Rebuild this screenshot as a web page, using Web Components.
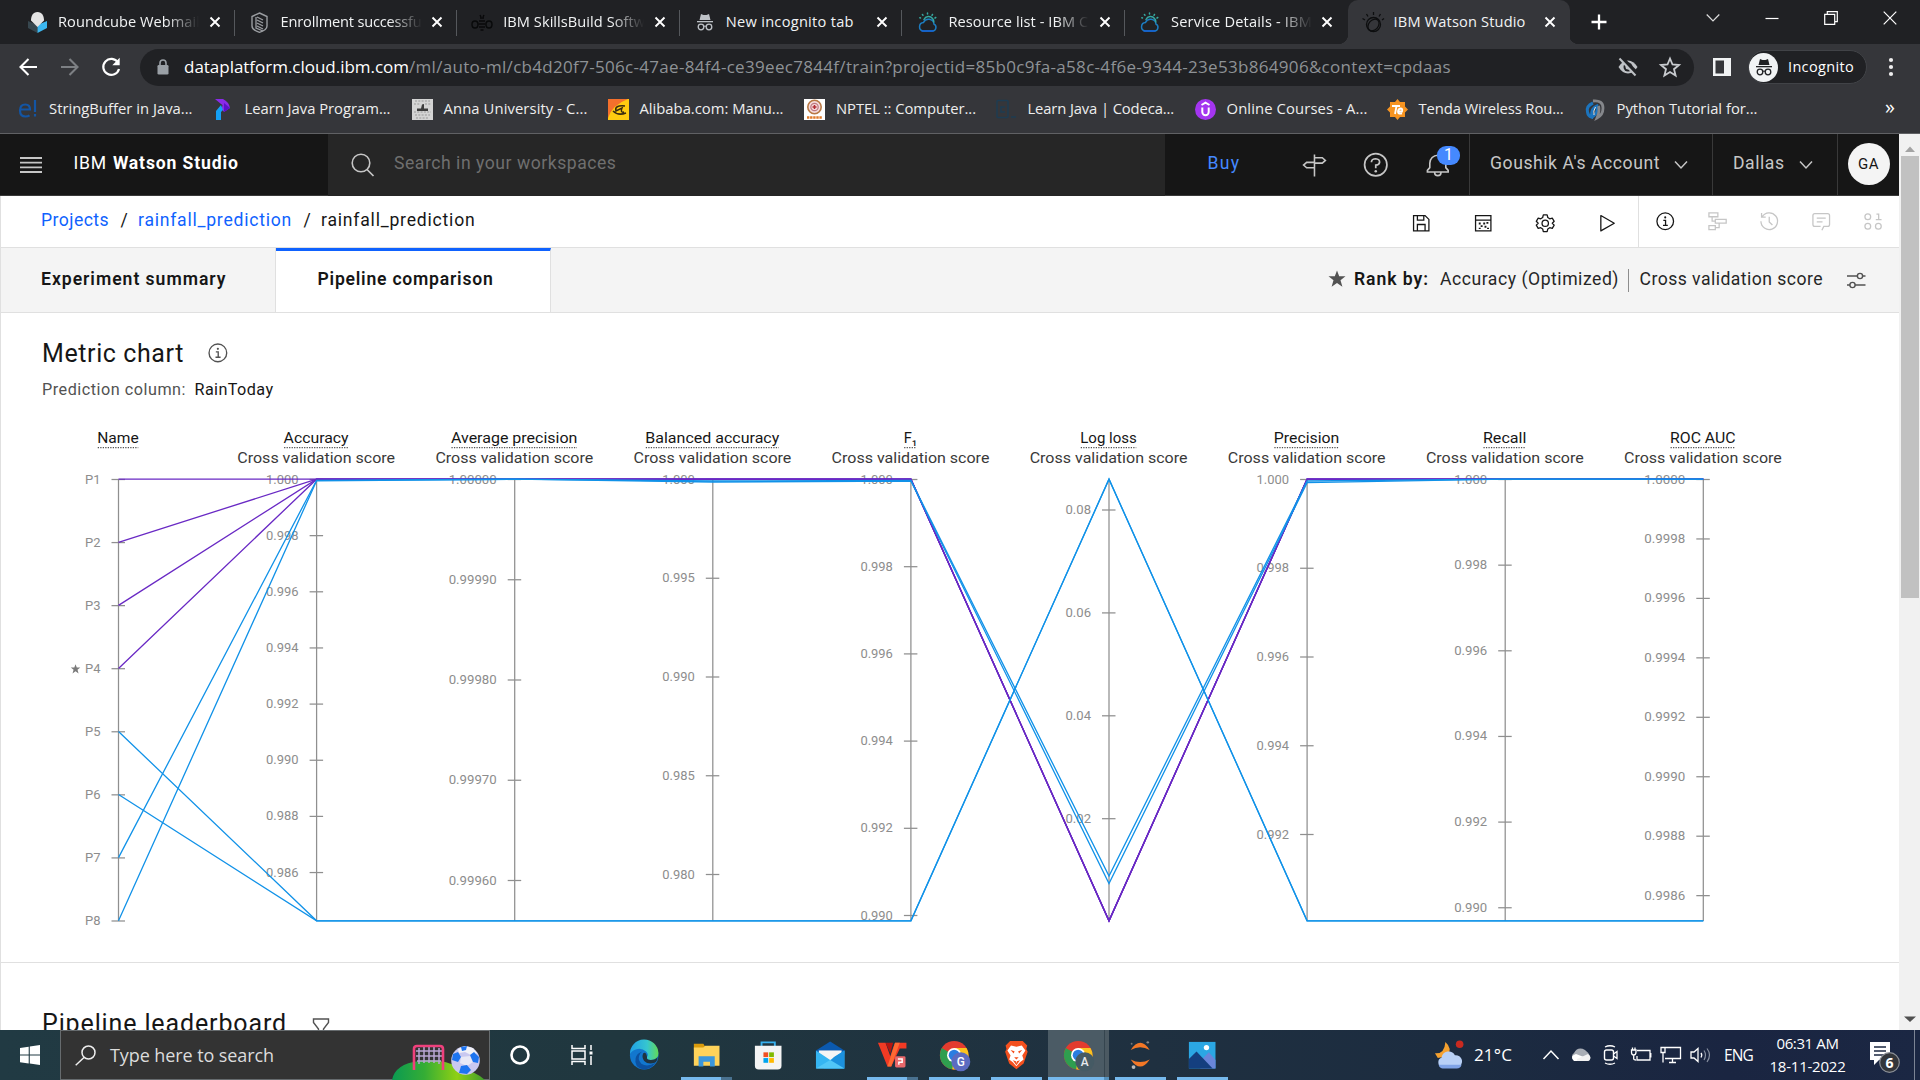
<!DOCTYPE html>
<html lang="en">
<head>
<meta charset="utf-8">
<title>IBM Watson Studio</title>
<style>
html,body{margin:0;padding:0;height:100%;overflow:hidden;background:#fff}
body{display:flex;flex-direction:column;width:1920px;height:1080px}
</style>
</head>
<body>
<browser-chrome></browser-chrome>
<page-view></page-view>
<task-bar></task-bar>
<script>
const SEG = '"Open Sans","Noto Sans",sans-serif';
const PLEX = 'Roboto,"Liberation Sans",sans-serif';

function define(name, markup, after) {
  customElements.define(name, class extends HTMLElement {
    constructor() { super(); this.attachShadow({mode: 'open'}); }
    connectedCallback() {
      this.shadowRoot.innerHTML = typeof markup === 'function' ? markup(this) : markup;
      if (after) after(this);
    }
  });
}

/* ---------- icons: [viewBox, content] ---------- */
const S = (c, w = 2) => `fill="none" stroke="${c}" stroke-width="${w}"`;
const C = 'currentColor';
const chromeLogo = (letter, bg, fg) => `
<circle cx="17" cy="17" r="15" fill="#e33b2e"/>
<path d="M17 17L4 9.500A15 15 0 0 0 15 31.900L23 20Z" fill="#2f9e4f"/>
<path d="M17 17L15 31.900A15 15 0 0 0 30 9.500H17Z" fill="#fcc31e"/>
<circle cx="17" cy="17" r="7.500" fill="#fff"/><circle cx="17" cy="17" r="5.700" fill="#2a7de1"/>
<circle cx="24" cy="24" r="10" fill="${bg}"/>
<text x="24" y="28.500" text-anchor="middle" font-family="Roboto,sans-serif" font-weight="500" font-size="12.500" fill="${fg}">${letter}</text>`;
const cloudSun = `<g fill="none" stroke-width="1.500" stroke-linecap="round"><path d="M6 19H15.500A3.600 3.600 0 0 0 17 12.200A5.500 5.500 0 0 0 6.500 10.500A4.300 4.300 0 0 0 6 19Z" stroke="#1c7cc0"/><path d="M5 19.100H16" stroke="#1562d6"/><path d="M7 7.500A5 5 0 0 1 15.500 6.500A5 5 0 0 1 16.800 10M3.500 6L2.800 5.700M6 3.300L5.400 2.600M10.500 2V1M15 3.300L15.500 2.500M18 6L18.800 5.500" stroke="#36a8a0"/></g>`;
const ICONS = {
 roundcube: ['0 0 21 21', '<path d="M1 9L10.500 13V21L1 16Z" fill="#37474f"/><path d="M20 9L10.500 13V21L20 16Z" fill="#3bb7f0"/><path d="M10.500 0C15 0 17 4 17 8.500L10.500 15L4 8.500C4 4 6 0 10.500 0Z" fill="#e4e4e4"/>'],
 shield: ['0 0 21 21', `<path d="M10.500 1L18 4.500V14Q18 18 10.500 20.300Q3 18 3 14V4.500Z" ${S('#9a9da1',1.4)}/><path d="M7 5V16L14 19M8 5L14 8M8 8L14 11M8 11L14 14M8 14L14 17" ${S('#9a9da1',1.3)}/>`],
 bee: ['0 0 22 21', `<g ${S('#08090a',1.4)}><path d="M8 9H14M7.500 12H14.500M8 15H14M9.500 18H12.500M9 6H13M9 3L10 5M13 3L12 5"/><ellipse cx="4" cy="12.500" rx="3" ry="3.500"/><ellipse cx="18" cy="12.500" rx="3" ry="3.500"/></g>`],
 incog: ['0 0 20 20', `<path d="M6 2L8.500 3H11.500L14 2L15.500 8H4.500Z" fill="${C}"/><path d="M2 9H18V10.300H2Z" fill="${C}"/><circle cx="6" cy="15" r="2.800" ${S(C,1.3)}/><circle cx="14" cy="15" r="2.800" ${S(C,1.3)}/><path d="M8.600 14.500Q10 13.500 11.400 14.500" ${S(C,1.2)}/>`],
 cloud: ['0 0 21 21', cloudSun],
 watson: ['0 0 22 22', `<g ${S('#0d0e0f',1.3)}><circle cx="11.500" cy="13.500" r="7"/><ellipse cx="11.500" cy="14" rx="6.500" ry="4.800" transform="rotate(-50 11.500 14)"/><path d="M11.500 4V1M6 5.500L4.500 3M17 5.500L18.500 3M3 9L.500 7.500M20 9L22 7.500"/></g>`],
 x: ['0 0 12 12', `<path d="M1.500 1.500L10.500 10.500M10.500 1.500L1.500 10.500" ${S('#fff',1.9)}/>`],
 plus: ['0 0 16 16', `<path d="M8 .500V15.500M.500 8H15.500" ${S('#fff',2.3)}/>`],
 wchev: ['0 0 14 14', `<path d="M.700 3.500L7 10L13.300 3.500" ${S('#ddd',1.2)}/>`],
 wmin: ['0 0 14 14', `<path d="M.500 7.500H13.500" ${S('#fff',1.2)}/>`],
 wmax: ['0 0 14 14', `<path d="M.700 3.300H10.700V13.300H.700ZM3.300 3V.700H13.300V10.700H11" ${S('#fff',1.2)}/>`],
 wx: ['0 0 14 14', `<path d="M.700 .700L13.300 13.300M13.300 .700L.700 13.300" ${S('#fff',1.2)}/>`],
 back: ['0 0 20 20', `<path d="M19 10H3M10.500 2L2.500 10L10.500 18" ${S(C,2.1)}/>`],
 fwd: ['0 0 20 20', `<path d="M1 10H17M9.500 2L17.500 10L9.500 18" ${S(C,2.1)}/>`],
 reload: ['0 0 20 20', `<path d="M17 5.500A8 8 0 1 0 18 12" ${S('#fff',2.2)}/><path d="M18.700 .800V8.200H11.300Z" fill="#fff"/>`],
 lock: ['0 0 12 16', `<rect x=".500" y="6" width="11" height="9.500" rx="1.300" fill="#9aa0a6"/><path d="M3 6.500V4A3 3 0 0 1 9 4V6.500" ${S('#9aa0a6',1.6)}/>`],
 eye: ['0 0 22 22', `<path d="M1.500 11Q5.500 4.500 11 4.500T20.500 11Q16.500 17.500 11 17.500T1.500 11Z" fill="#bfc2c6"/><circle cx="11" cy="11" r="4.500" fill="#202124"/><circle cx="11" cy="11" r="2.500" fill="#bfc2c6"/><path d="M4 1.500L20.500 18" ${S('#202124',4)}/><path d="M2.500 2.500L18.500 19.500" ${S('#bfc2c6',2)}/>`],
 star: ['0 0 22 22', `<path d="M11 2.500L13.500 8.500L20 9L15 13.200L16.600 19.500L11 16L5.400 19.500L7 13.200L2 9L8.500 8.500Z" ${S('#c8cbcf',1.8)}/>`],
 panel: ['0 0 18 18', '<path d="M0 0H18V18H0ZM2.500 2.500V15.500H11V2.500Z" fill="#f1f3f4" fill-rule="evenodd"/>'],
 dots: ['0 0 6 20', '<circle cx="3" cy="3" r="2.100" fill="#eee"/><circle cx="3" cy="10" r="2.100" fill="#eee"/><circle cx="3" cy="17" r="2.100" fill="#eee"/>'],
 edu: ['0 0 20 20', `<path d="M2 10.500H12Q12 5.500 7.300 5.500Q2 5.500 2 11.500Q2 17.500 7.500 17.500Q10 17.500 11.500 16.300M17 1V13M17 15V17.500" ${S('#1355a4',2.2)}/>`],
 prog: ['0 0 16 21', '<path d="M0 0H8Q14 3 15 9L9 13L6 9Q9 6 6 5Z" fill="#8a2be8"/><path d="M9 4L15 9L9 13Z" fill="#5b10c8"/><path d="M6 6L1 12V21H6V13L8 11Z" fill="#14a0f5"/>'],
 anna: ['0 0 21 21', '<path d="M0 0H21V21H0Z" fill="#d4d4d4"/><path d="M3 2H18M2 5H8M13 5H19M2 13H19M3 16H18M4 19H17" stroke="#989898" stroke-width="1.200" stroke-dasharray="2 1.300"/><path d="M5 9.500H9L10 5.500L12 5V9.500H16V12H5Z" fill="#3c3c3c"/>'],
 ali: ['0 0 21 21', '<path d="M0 0H21V21H0Z" fill="#ffcb10"/><path d="M0 0H20Q4 6 0 19Z" fill="#f4702c"/><path d="M17 7Q6 6 8 12Q10 11 14 9Q12 14 16 13M18 14Q10 17 5 12" fill="none" stroke="#3a2b10" stroke-width="1.500"/>'],
 nptel: ['0 0 21 21', '<path d="M0 0H21V21H0Z" fill="#fff"/><circle cx="10.500" cy="8" r="6.700" fill="#f5dadb" stroke="#b87945" stroke-width="1.600"/><circle cx="10.500" cy="8" r="3.700" fill="none" stroke="#bd7a80" stroke-width="1.200"/><path d="M10.500 6V10M8.500 8H12.500" stroke="#b42e35" stroke-width="1.500"/><path d="M3 18.500H18" stroke="#e07a2a" stroke-width="2.500" stroke-dasharray="2.400 .700"/>'],
 codec: ['0 0 21 21', `<rect x="1" y="1.500" width="11" height="17" rx="1" ${S('#1e3c52',1.5)}/><path d="M9 8H5V13H9M15 18H20" ${S('#1e3c52',1.5)}/>`],
 udemy: ['0 0 21 21', `<circle cx="10.500" cy="10.500" r="10.500" fill="#a435f0"/><path d="M6.500 6L10.500 3.700L14.500 6M7.300 8.500V13A3.200 3.200 0 0 0 13.700 13V8.500" ${S('#fff',2)}/>`],
 tenda: ['0 0 21 21', `<path d="M10.500 0L13 3H18V7.500L21 10.500L18 13.500V18H13L10.500 21L8 18H3V13.500L0 10.500L3 7.500V3H8Z" fill="#f79421"/><path d="M5 7H13M9.500 7L8 15M11 12.500H15Q16 9.500 13.500 9.500Q11 10 11 13Q11.500 15.500 15 14.300" ${S('#fff',1.8)}/>`],
 py: ['0 0 20 21', `<path d="M8 4Q1 7 2.500 13Q3 17 6.500 18Q6 9 12 7Q14 14 6 19" ${S('#1c74bd',3)}/><path d="M8 2Q18 1 18 9Q18 16 12 19Q15 12 13.500 7" ${S('#85878b',2.800)}/><path d="M10.500 8Q8 12 9 16" fill="none" stroke="#e8e8e8" stroke-width="1"/>`],
 menu: ['0 0 22 16', `<path d="M0 1H22M0 5.700H22M0 10.400H22M0 15H22" ${S('#c6c6c6',1.8)}/>`],
 search: ['0 0 24 24', `<circle cx="10" cy="10" r="8.800" ${S('#c6c6c6',1.6)}/><path d="M16 16.500L22.500 23" ${S('#c6c6c6',1.7)}/>`],
 sign: ['0 0 32 32', `<path d="M16 2V30M16 6H26L30 9.500L26 13H16M16 12H6L2 15.500L6 19H16" ${S('#c6c6c6')}/>`],
 help: ['0 0 32 32', `<circle cx="16" cy="16" r="13" ${S('#c6c6c6')}/><path d="M11 13V12.500Q11.500 9 16 9Q20.500 9.500 20.500 13Q20 16.500 16 16.500V20" ${S('#c6c6c6')}/><circle cx="16" cy="23.500" r="1.500" fill="#c6c6c6"/>`],
 bell: ['0 0 32 32', `<path d="M3 24V22L6 18.500V13A10 10 0 0 1 26 13V18.500L29 22V24ZM12 24.500A4 4 0 0 0 20 24.500" ${S('#c6c6c6')} transform="translate(0 1)"/>`],
 chev: ['0 0 14 10', `<path d="M1 1.500L7 8L13 1.500" ${S('#c6c6c6',1.5)}/>`],
 save: ['0 0 32 32', `<path d="M4 4H22L28 10V28H4ZM10 4V11H20V4M10 28V18H22V28" ${S(C)}/>`],
 sched: ['0 0 32 32', `<path d="M4 4H28V28H4ZM4 11H28" ${S(C)}/><path d="M9 15H12V18H9ZM16 15H19V18H16ZM21 14H24V17H21ZM12 19H15V22H12ZM18 20H21V23H18ZM9 23H12V25H9ZM22 23H25V25H22Z" fill="${C}"/>`],
 gear: ['0 0 32 32', `<circle cx="16" cy="16" r="5" ${S(C)}/><path d="M13 3H19L20 7L23 9L27 8L30 13L27 16L30 19L27 24L23 23L20 25L19 29H13L12 25L9 23L5 24L2 19L5 16L2 13L5 8L9 9L12 7Z" ${S(C)} stroke-linejoin="round"/>`],
 play: ['0 0 32 32', `<path d="M6 4L27 16L6 28Z" ${S(C)} stroke-linejoin="round"/>`],
 info: ['0 0 32 32', `<circle cx="16" cy="16" r="13" ${S(C)}/><path d="M13 14.500H16.500V22M12.500 22.500H20" ${S(C)}/><circle cx="16" cy="10" r="1.600" fill="${C}"/>`],
 flow: ['0 0 32 32', `<path d="M3 3H17V9H3ZM13 13H30V19H13ZM3 23H13V29H3ZM8 9V16H13M19 19V26H13" ${S(C)}/>`],
 hist: ['0 0 32 32', `<path d="M5 9A13 13 0 1 1 3 16M4 3V9.500H10.500M16 9V17L21 22" ${S(C)}/>`],
 chat: ['0 0 32 32', `<path d="M17 30L20 24H26Q29 24 29 21V7Q29 4 26 4H6Q3 4 3 7V21Q3 24 6 24H15M9 11H23M9 17H18" ${S(C)}/>`],
 bin: ['0 0 32 32', `<circle cx="7.500" cy="9" r="4.500" ${S(C)}/><circle cx="7.500" cy="24" r="4.500" ${S(C)}/><circle cx="24" cy="24" r="4.500" ${S(C)}/><path d="M21 5H24.500V13M20 13.500H29" ${S(C)}/>`],
 bstar: ['0 0 18 18', '<path d="M9 .500L11.200 6.300H17.500L12.500 10.300L14.400 16.800L9 13L3.600 16.800L5.500 10.300L.500 6.300H6.800Z" fill="#525252"/>'],
 sliders: ['0 0 20 18', `<path d="M1 5H11M17 5H19.500M1 14H4M9 14H19.500" ${S('#525252',1.4)}/><circle cx="14" cy="5" r="2.600" ${S('#525252',1.4)}/><circle cx="6.500" cy="14" r="2.600" ${S('#525252',1.4)}/>`],
 filter: ['0 0 18 20', `<path d="M1.500 1H16.500V4.500L11.500 11V18H6.500V11L1.500 4.500Z" ${S('#525252',1.4)}/>`],
 up: ['0 0 12 7', '<path d="M1 6L6 .500L11 6Z" fill="#a3a3a3"/>'],
 down: ['0 0 12 7', '<path d="M0 .500L6 6L12 .500Z" fill="#505050"/>'],
 win: ['0 0 20 20', '<path d="M0 3L8.700 1.700V9.500H0ZM9.800 1.500L20 0V9.500H9.800ZM0 10.600H8.700V18.400L0 17.200ZM9.800 10.600H20V20L9.800 18.600Z" fill="#fff"/>'],
 tsearch: ['0 0 21 21', `<circle cx="13.500" cy="7.500" r="6.500" ${S('#eee',1.5)}/><path d="M9 12.500L.700 20.300" ${S('#eee',1.5)}/>`],
 football: ['0 0 100 36', `<defs><linearGradient id="h" x1="0" x2="1"><stop stop-color="#0a9a52"/><stop offset=".35" stop-color="#35ad35"/><stop offset=".7" stop-color="#8fd014"/><stop offset="1" stop-color="#3f9c2c"/></linearGradient></defs><path d="M3 36Q6 20 30 17Q55 14 70 24Q88 28 96 36Z" fill="url(#h)"/>
 <g fill="none" stroke="#b9a6d3" stroke-width="1.500"><path d="M30 4V20M35 2V19M40 2V19M45 2V19M50 4V20M27 7H53M27 12H53M28 17H52"/></g><path d="M25 26V5Q25 2 28 2H51Q54 2 54 5V26" fill="none" stroke="#f0407c" stroke-width="2.600"/>
 <circle cx="76.500" cy="16.500" r="14.300" fill="#c9c8f0"/><path d="M76 2L84 4L88 9L84 12L76 8L70 9L69 5Z" fill="#f1f1f8"/><path d="M72 13L81 12L84 18L78 22L71 19Z" fill="#e8e8f6"/><path d="M64 10L69 8L72 13L69 18L63 16ZM81 11L85 8L90 13L89 19L84 18ZM72 22L78 21L82 26L78 30L70 29ZM72 3L78 2L77 6L73 7Z" fill="#1d74f0"/>`],
 cortana: ['0 0 22 22', `<circle cx="11" cy="11" r="8.500" ${S('#fff',2.6)}/>`],
 tview: ['0 0 22 22', `<path d="M1 1V4.500H14V1M1 21V17.500H14V21M1 7H14V15H1ZM20 1V6M20 12V21" ${S('#fff',1.5)}/><path d="M18.500 7.500H21.500V10.500H18.500Z" fill="#fff"/>`],
 edge: ['0 0 32 32', '<defs><linearGradient id="a" x1="0" x2="1"><stop stop-color="#1f9fe6"/><stop offset=".6" stop-color="#36c6d0"/><stop offset="1" stop-color="#62d957"/></linearGradient></defs><circle cx="16" cy="16" r="15" fill="#1277ce"/><path d="M1 15A15 15 0 0 1 31 14Q31 21 23 21Q18 21 19 18Q21 15 18 12Q13 8 7 10Q3 11 1 15Z" fill="url(#a)"/><path d="M12 14Q8 20 13 25Q19 29 28 24Q23 31 15 31Q5 29 7 19Q8 14 14 12Z" fill="#0c51a0"/><path d="M19 18Q18 21 23 21Q28 21 30 18Q30 23 27 24Q20 26 16 22Q13 18 15 14Q18 12 19 18Z" fill="#20333f"/>'],
 explorer: ['0 0 32 32', '<path d="M3 4H13L15 7H29V10H3Z" fill="#d99a0b"/><path d="M3 8H13L15 6H30V27H3Z" fill="#ffd35a"/><path d="M8 17H25V28H20V23H13V28H8Z" fill="#3b97dc"/>'],
 store: ['0 0 32 32', `<path d="M9 8V2.500H23V8" ${S('#37b0ee',2)}/><path d="M2 6H30V27Q30 31 26 31H6Q2 31 2 27Z" fill="#f4f4f4"/><path d="M11 13H16V18H11Z" fill="#f25022"/><path d="M17 13H22V18H17Z" fill="#7fba00"/><path d="M11 19H16V24H11Z" fill="#00a4ef"/><path d="M17 19H22V24H17Z" fill="#ffb900"/>`],
 mail: ['0 0 32 32', '<path d="M1 11L16 1.500L31 11V15H1Z" fill="#0b59ae"/><path d="M4 11H28V22H4Z" fill="#f5f5f5"/><path d="M1 11L16 21L31 11V30H1Z" fill="#35b5f2"/><path d="M31 11V30H9L20 18Z" fill="#1c91de"/><path d="M1 30L16 21L31 30Z" fill="#51c6f7"/>'],
 wps: ['0 0 32 32', '<path d="M1 3H9L14 17L17 8L19 3H31V9H24L15 28H11Z" fill="#f23a24"/><path d="M9 3H17L14 14Z" fill="#b71410"/><path d="M19 3H24L15 28H11Z" fill="#ff6a33"/><rect x="19" y="17" width="11" height="12" rx="1.500" fill="#e8686b"/><path d="M22 20H26.500V23.500H23V26" fill="none" stroke="#fff" stroke-width="1.500"/>'],
 chromeG: ['0 0 34 34', chromeLogo('G', '#5c6bc0', '#fff')],
 brave: ['0 0 32 32', '<path d="M9 0H23L28 5L27 9L28.500 12L24 25L16 31.500L8 25L3.500 12L5 9L4 5Z" fill="#f4501e"/><path d="M10 5L16 6.500L22 5L26 10.500L22.500 16L24 20.500L20 23.500L16 28L12 23.500L8 20.500L9.500 16L6 10.500Z" fill="#fff"/><path d="M9.500 10L14 11.500L13 14ZM22.500 10L18 11.500L19 14ZM13.500 18H18.500L16 20.500ZM12 21.500L15.500 22.500L16 25L16.500 22.500L20 21.500L16 27Z" fill="#f4501e"/>'],
 chromeA: ['0 0 34 34', chromeLogo('A', '#455a64', '#e8eaed')],
 jup: ['0 0 32 32', '<path d="M6 10.500Q16-4.500 26 10.500Q16 5 6 10.500ZM6 20.500Q16 35.500 26 20.500Q16 26 6 20.500Z" fill="#f37726"/><circle cx="9" cy="28.500" r="2" fill="#bbb"/><circle cx="24" cy="2.500" r="1.300" fill="#888"/><circle cx="7" cy="4" r="1" fill="#777"/>'],
 photos: ['0 0 32 32', '<path d="M2 2H30V30H2Z" fill="#2ba7e4"/><path d="M14 22L23 13L30 21V30H14Z" fill="#6a86da"/><path d="M2 20L10 12L27 30H2Z" fill="#143f7f"/><circle cx="20.500" cy="8" r="2.800" fill="#fff"/>'],
 weather: ['0 0 32 32', '<path d="M12 2Q20 9 14 17L4 19L1 14Q11 15 12 2Z" fill="#f5a12f"/><path d="M9 29A5.500 5.500 0 0 1 8 18.500A7.500 7.500 0 0 1 22 16A6.700 6.700 0 0 1 25 29Z" fill="#b8d0f6"/><path d="M5 26H29Q28 30 24 30H9Q5 29 5 26Z" fill="#7fa3e6"/><circle cx="27" cy="4.500" r="4" fill="#c92a20"/>'],
 tup: ['0 0 22 22', `<path d="M3.500 15L11 7L18.500 15" ${S('#fff',1.5)}/>`],
 drive: ['0 0 22 22', '<path d="M5 17A4.500 4.500 0 0 1 4 9Q8 2 15 6Q19 9 20 12Q21 17 18 17Z" fill="#a8adb5"/><path d="M4 17Q-1 12 6 10L19 15Q19 17 17 17Z" fill="#fff"/><path d="M7 15L18 10Q23 14 18 17H7Z" fill="#f2f2f2"/>'],
 meet: ['0 0 22 22', `<rect x="4.500" y="6" width="9" height="10" rx="2" ${S('#fff',1.4)}/><path d="M13.500 10L17 7.500V14.500L13.500 12M5 3Q10 .500 15 3M5 19Q10 21.500 15 19" ${S('#fff',1.3)}/>`],
 batt: ['0 0 22 22', `<path d="M7 6.500H20V16H7V12M20.800 9V13.500M1.500 6H6V8Q6 11 3.700 11T1.500 8ZM2.500 3.500V6M5 3.500V6M3.700 11V15Q4 16 6 16" ${S('#fff',1.3)}/>`],
 net: ['0 0 22 22', `<path d="M5 3.500H20.500V14.500H5M12.500 14.500V18.500M9 18.500H16M1 3.500H5V8.500H1ZM3 8.500V18.500" ${S('#fff',1.3)}/>`],
 snd: ['0 0 22 22', `<path d="M1 8H4L8 4.500V17.500L4 14H1Z" ${S('#fff',1.3)}/><path d="M11 9Q12.500 11 11 13.500" ${S('#fff',1.3)}/><path d="M14 6.500Q17 11 14 16M17 4.500Q22 11 17 18" ${S('#8790a0',1.2)}/>`],
 notif: ['0 0 30 34', '<path d="M1 1H21V19H10L5 24V19H1Z" fill="#fff"/><path d="M5 6H17M5 10H17M5 14H17" stroke="#1b2740" stroke-width="1.400"/><circle cx="20.500" cy="21.500" r="9.800" fill="#33363b" stroke="#8b8f96" stroke-width="1.200"/><text x="20.500" y="26.500" text-anchor="middle" font-family="Open Sans,sans-serif" font-weight="700" font-size="14" fill="#fff">6</text>']
};
define('ui-icon', el => {
  const [vb, body] = ICONS[el.getAttribute('name')];
  const [, , w, h] = vb.split(' ').map(Number);
  const s = +(el.getAttribute('scale') || 1);
  return `<style>:host{display:block;flex:none;line-height:0}svg{display:block;overflow:visible}</style><svg width="${w*s}" height="${h*s}" viewBox="${vb}">${body}</svg>`;
});

/* ---------- browser chrome ---------- */
define('browser-tab', el => `<style>
:host{display:flex;flex:none;width:222.600px;height:44px;box-sizing:border-box;align-items:center;padding-left:14px;position:relative;border-right:1px solid transparent}
:host(:not([active])):after{content:"";position:absolute;right:-1px;top:10px;height:26px;width:1px;background:#55585c}
:host([last]):after{display:none}
:host([active]){background:#35363a;border-radius:10px 10px 0 0}
:host([active]):before{content:"";position:absolute;left:-10px;bottom:0;width:10px;height:10px;background:radial-gradient(circle at 0 0,transparent 10px,#35363a 10.500px)}
:host([active]):after{content:"";position:absolute;right:-10px;bottom:0;width:10px;height:10px;background:radial-gradient(circle at 100% 0,transparent 10px,#35363a 10.500px)}
.i{width:22px;display:flex;justify-content:center;color:#bdc1c6}
.t{width:142px;margin-left:10px;overflow:hidden;font:14.600px/30px ${SEG};color:#f1f3f4;padding-bottom:2px}
:host([fade]) .t{-webkit-mask-image:linear-gradient(90deg,#000 108px,transparent 141px)}
.x{margin-left:8.500px}
</style><div class="i"><ui-icon name="${el.getAttribute('icon')}"></ui-icon></div><div class="t"><slot></slot></div><ui-icon class="x" name="x"></ui-icon>`);

define('bookmark-item', el => `<style>
:host{display:flex;flex:none;width:${el.getAttribute('w')}px;align-items:center;font:14.800px/24px ${SEG};color:#eee}
.i{width:21px;margin-right:11px;display:flex;justify-content:center}
::slotted(*){margin-bottom:2px}
</style><div class="i"><ui-icon name="${el.getAttribute('icon')}"></ui-icon></div><slot></slot>`);

define('omni-bar', `<style>
:host{display:flex;width:1554px;height:37px;box-sizing:border-box;border-radius:19px;background:#202124;align-items:center;padding:0 13px 0 17px;font:17px/34px ${SEG};color:#8e9296}
.d{color:#fff}.lock{margin-right:15px}.s{margin-left:auto;display:flex;gap:20px}
</style><ui-icon class="lock" name="lock"></ui-icon><fit-text class="d" w="225">dataplatform.cloud.ibm.com</fit-text><fit-text w="1042">/ml/auto-ml/cb4d20f7-506c-47ae-84f4-ce39eec7844f/train?projectid=85b0c9fa-a58c-4f6e-9344-23e53b864906&amp;context=cpdaas</fit-text>
<div class="s"><ui-icon name="eye"></ui-icon><ui-icon name="star"></ui-icon></div>`);

define('browser-chrome', `<style>
:host{display:block;height:134px;background:#35363a;flex:none;box-sizing:border-box;border-bottom:1px solid #606164}
.strip{height:44px;background:#202124;display:flex;padding-left:12px;align-items:center}
.plus{margin-left:21px}
.wc{margin-left:auto;display:flex;align-items:center;gap:45px;padding:0 23px 8px 0}
.bar{display:flex;align-items:center;height:46px;padding-left:18px}
.nav{display:flex;gap:21.500px;width:122px}
.nav ui-icon:nth-child(2){color:#7d8084}.nav ui-icon{color:#fff}
.panel{margin-left:19px}
.pill{margin-left:17px;width:119px;height:34px;box-sizing:border-box;background:#202124;border:1px solid #414347;border-radius:17px;display:flex;align-items:center;font:14.500px/30px ${SEG};color:#fff;padding-left:0}
.av{width:29px;height:29px;border-radius:50%;background:#f1f3f4;color:#202124;display:flex;align-items:center;justify-content:center;margin-right:10px}
.dots{margin-left:21px}
.marks{display:flex;align-items:center;height:38px;padding-left:17px}
.more{font:20px/24px ${SEG};color:#fff;margin-left:auto;padding:0 25px 5px 0}
</style>
<div class="strip">
<browser-tab icon="roundcube" fade><fit-text w="142">Roundcube Webmail</fit-text></browser-tab>
<browser-tab icon="shield" fade><fit-text w="141">Enrollment successfu</fit-text></browser-tab>
<browser-tab icon="bee" fade><fit-text w="142">IBM SkillsBuild Softw</fit-text></browser-tab>
<browser-tab icon="incog"><fit-text w="128">New incognito tab</fit-text></browser-tab>
<browser-tab icon="cloud" fade><fit-text w="140">Resource list - IBM C</fit-text></browser-tab>
<browser-tab icon="cloud" fade last><fit-text w="141">Service Details - IBM</fit-text></browser-tab>
<browser-tab icon="watson" active><fit-text w="132">IBM Watson Studio</fit-text></browser-tab>
<ui-icon class="plus" name="plus"></ui-icon>
<div class="wc"><ui-icon name="wchev"></ui-icon><ui-icon name="wmin"></ui-icon><ui-icon name="wmax"></ui-icon><ui-icon name="wx"></ui-icon></div>
</div>
<div class="bar"><div class="nav"><ui-icon name="back"></ui-icon><ui-icon name="fwd"></ui-icon><ui-icon name="reload"></ui-icon></div>
<omni-bar></omni-bar><ui-icon class="panel" name="panel"></ui-icon>
<div class="pill"><div class="av"><ui-icon name="incog"></ui-icon></div><fit-text w="66">Incognito</fit-text></div><ui-icon class="dots" name="dots"></ui-icon></div>
<div class="marks">
<bookmark-item w="195.500" icon="edu"><fit-text w="143.500">StringBuffer in Java...</fit-text></bookmark-item>
<bookmark-item w="199" icon="prog"><fit-text w="146">Learn Java Program...</fit-text></bookmark-item>
<bookmark-item w="196" icon="anna"><fit-text w="144">Anna University - C...</fit-text></bookmark-item>
<bookmark-item w="196.500" icon="ali"><fit-text w="144">Alibaba.com: Manu...</fit-text></bookmark-item>
<bookmark-item w="191.500" icon="nptel"><fit-text w="140">NPTEL :: Computer...</fit-text></bookmark-item>
<bookmark-item w="199" icon="codec"><fit-text w="146.500">Learn Java | Codeca...</fit-text></bookmark-item>
<bookmark-item w="192" icon="udemy"><fit-text w="141">Online Courses - A...</fit-text></bookmark-item>
<bookmark-item w="198" icon="tenda"><fit-text w="145">Tenda Wireless Rou...</fit-text></bookmark-item>
<bookmark-item w="190" icon="py"><fit-text w="141">Python Tutorial for...</fit-text></bookmark-item>
<span class="more">»</span></div>`);

/* ---------- page ---------- */
define('studio-header', `<style>
:host{display:grid;grid-template-columns:328px 837px 118px 62px 62px 63px 243px 125px 61px;height:62px;box-sizing:border-box;background:#161616;border-bottom:1px solid #393939;font:17.600px/24px ${PLEX};color:#c6c6c6;flex:none}
:host>div{display:flex;align-items:center;box-sizing:border-box}
.brand{padding-left:20px;color:#fff}.brand ui-icon{margin:4px 31.500px 0 0}.brand b{font-weight:700}
.brand,.q,.acc,.dal{padding-bottom:4px}
.q{background:#262626;padding-left:23px;color:#6f6f6f;height:62px}.q ui-icon{margin:4px 19px 0 0}
.c{justify-content:center}
.buy{color:#4589ff;padding-bottom:4px}
.bell{position:relative;border-right:1px solid #393939}
.badge{position:absolute;left:30px;top:12px;width:23px;height:19px;border-radius:9px;background:#4589ff;color:#fff;font-size:16px;line-height:18px;text-align:center}
.acc{border-right:1px solid #393939;padding-left:20px}.acc ui-icon,.dal ui-icon{margin:3px 0 0 14px}
.dal{border-right:1px solid #393939;padding-left:20px}
.av{width:42px;height:42px;border-radius:50%;background:#f4f4f4;color:#161616;font-size:15px;display:flex;align-items:center;justify-content:center;margin-bottom:2px}
</style>
<div class="brand"><ui-icon name="menu"></ui-icon><fit-text w="33.500">IBM</fit-text>&nbsp;<fit-text w="126" style="margin-left:1.500px"><b>Watson Studio</b></fit-text></div>
<div class="q"><ui-icon name="search"></ui-icon><fit-text w="222.500">Search in your workspaces</fit-text></div>
<div class="c buy"><fit-text w="33">Buy</fit-text></div>
<div class="c"><ui-icon name="sign" scale=".78"></ui-icon></div><div class="c"><ui-icon name="help" scale=".86"></ui-icon></div>
<div class="c bell"><ui-icon name="bell" scale=".8"></ui-icon><span class="badge">1</span></div>
<div class="acc"><fit-text w="170">Goushik A's Account</fit-text><ui-icon name="chev"></ui-icon></div>
<div class="dal"><fit-text w="51.500">Dallas</fit-text><ui-icon name="chev"></ui-icon></div>
<div class="c"><div class="av"><fit-text w="21">GA</fit-text></div></div>`);

define('crumb-bar', `<style>
:host{display:flex;height:52px;box-sizing:border-box;border-bottom:1px solid #e0e0e0;font:17.600px/24px ${PLEX};color:#161616;flex:none;align-items:center;padding-left:40px}
a{color:#0f62fe}.n{display:flex;gap:11.500px;padding-bottom:4px}
.a,.b{display:flex;height:51px;align-items:center}.a{margin-left:auto;border-right:1px solid #e0e0e0}
.a div{width:62px;display:flex;justify-content:center;padding-top:3px}.b div{width:52px;display:flex;justify-content:center;color:#c6c6c6}.b div:first-child{color:#161616}
</style><div class="n"><a><fit-text w="68">Projects</fit-text></a><fit-text w="6">/</fit-text><a><fit-text w="154">rainfall_prediction</fit-text></a><fit-text w="6">/</fit-text><fit-text w="154.500">rainfall_prediction</fit-text></div>
<div class="a">${['save','sched','gear','play'].map(n => `<div><ui-icon name="${n}" scale=".64"></ui-icon></div>`).join('')}</div>
<div class="b">${['info','flow','hist','chat','bin'].map(n => `<div><ui-icon name="${n}" scale=".64"></ui-icon></div>`).join('')}</div>`);

define('view-tabs', `<style>
:host{display:flex;height:65px;box-sizing:border-box;border-bottom:1px solid #e0e0e0;background:#f4f4f4;font:17.600px/24px ${PLEX};color:#262626;flex:none}
.t{width:275px;box-sizing:border-box;padding:19px 0 0 40px;font-weight:600;color:#161616;border-right:1px solid #e0e0e0;height:64px}
.on{width:275px;background:#fff;border-top:3px solid #0f62fe;padding:16px 0 0 41.500px}
.r{margin-left:auto;display:flex;align-items:center;padding:0 33px 0 0;height:62px}
.r b{color:#161616;font-weight:600}
.s{width:1px;height:23px;background:#8d8d8d;margin:2px 11px 0 8.500px}
</style><div class="t"><fit-text w="185.500">Experiment summary</fit-text></div><div class="t on"><fit-text w="176">Pipeline comparison</fit-text></div>
<div class="r"><ui-icon name="bstar"></ui-icon><b><fit-text w="75" style="margin:0 11px 0 8px">Rank by:</fit-text></b><fit-text w="179">Accuracy (Optimized)</fit-text><span class="s"></span><fit-text w="183.500">Cross validation score</fit-text><ui-icon name="sliders" style="margin:2px 0 0 23px"></ui-icon></div>`);

const X0 = 118.5, DX = 198.1, TOP = 479.5, BOT = 921;
const AXES = [
 ['Name', 41.5, ['P1','P2','P3','P4','P5','P6','P7','P8'], TOP, 63.07, 15.5],
 ['Accuracy', 65, ['1.000','0.998','0.996','0.994','0.992','0.990','0.988','0.986'], TOP, 56.15, 32.5],
 ['Average precision', 126.5, ['1.00000','0.99990','0.99980','0.99970','0.99960'], TOP, 100.25, 48],
 ['Balanced accuracy', 134, ['1.000','0.995','0.990','0.985','0.980'], TOP, 98.75, 32.5],
 ['F₁', 13.5, ['1.000','0.998','0.996','0.994','0.992','0.990'], TOP, 87.2, 32.5],
 ['Log loss', 56.5, ['0.08','0.06','0.04','0.02'], 510, 102.9, 25.5],
 ['Precision', 65.5, ['1.000','0.998','0.996','0.994','0.992'], TOP, 88.75, 32.5],
 ['Recall', 43.5, ['1.000','0.998','0.996','0.994','0.992','0.990'], TOP, 85.65, 33],
 ['ROC AUC', 65.5, ['1.0000','0.9998','0.9996','0.9994','0.9992','0.9990','0.9988','0.9986'], TOP, 59.45, 41]
];
const T = 479.2, B = 920.8;
const RUNS = [
 ...[0,1,2,3].map(i => ['#6929c4', [i, T, T, T, T, B, T, T, T]]),
 ...[4,5].map(i => ['#1192e8', [i, B, B, B, B, T, B, B, B]]),
 ['#1192e8', [6, 480.3, T, 481, 480.3, 876, 481, T, T]],
 ['#1192e8', [7, 480.8, T, 482, 481, 883.5, 482.7, T, T]]
];
define('parallel-chart', () => {
  let s = '';
  AXES.forEach(([name, tw, labels, y0, dy, lw], i) => {
    const x = X0 + i * DX;
    s += `<text class="h" x="${x - tw/2 - .5}" y="443" textLength="${tw}" lengthAdjust="spacingAndGlyphs">${name}</text>`;
    s += `<path class="u" d="M${x - tw/2} 447.700H${x + tw/2 - 1}"/>`;
    if (i) s += `<text class="c" x="${x - 79.3}" y="463" textLength="157.800" lengthAdjust="spacingAndGlyphs">Cross validation score</text>`;
    s += `<path class="a" d="M${x} ${TOP}V${BOT}"/>`;
    labels.forEach((l, k) => {
      const y = y0 + dy * k;
      s += `<path class="a" d="M${x - 7} ${y}H${x + 6.5}"/><text class="l" x="${x - 18 - lw}" y="${y + 4}" textLength="${lw}" lengthAdjust="spacingAndGlyphs">${l}</text>`;
    });
  });
  s += `<path transform="translate(70.500 664) scale(.56)" d="M9 .500L11.200 6.300H17.500L12.500 10.300L14.400 16.800L9 13L3.600 16.800L5.500 10.300L.500 6.300H6.800Z" fill="#7a7a7a"/>`;
  RUNS.forEach(([c, p]) => {
    s += `<polyline fill="none" stroke="${c}" stroke-width="1.300" points="${p.map((y, i) => (X0 + i*DX).toFixed(1) + ',' + (i ? y : TOP + 63.07*y - .3)).join(' ')}"/>`;
  });
  return `<style>:host{display:block;height:552px}svg{display:block;font-family:${PLEX}}
.h{font-size:15px;fill:#161616}.c{font-size:15px;fill:#393939}.l{font-size:13px;fill:#8d8d8d}
.a{stroke:#8f8f8f;stroke-width:1.250;fill:none}.u{stroke:#525252;stroke-width:1.300;stroke-dasharray:1.250 1.250}</style>
<svg width="1899" height="552" viewBox="1 410 1899 552">${s}</svg>`;
});

define('page-view', `<style>
:host{display:flex;height:896px;flex:none;overflow:hidden;font-family:${PLEX}}
.p{width:1899px;height:896px;overflow:hidden;display:flex;flex-direction:column}
.body{border-left:1px solid #e0e0e0;flex:1;display:flex;flex-direction:column}
h2{margin:0;font:400 25px/32px ${PLEX};color:#161616;display:flex;align-items:center}
.top{height:97px;flex:none;padding-left:41px;box-sizing:border-box;padding-top:25px}
.top h2 ui-icon{margin-left:23px;color:#525252;margin-bottom:3px}
.pc{font-size:16.200px;line-height:24px;color:#525252;display:flex;gap:8.500px;margin-top:8px}.pc .v{color:#161616}
.lead{border-top:1px solid #e0e0e0;padding:45px 0 0 41px;height:67px;flex:none;box-sizing:border-box}
.lead ui-icon{margin:7px 0 0 25px}
.sb{width:21px;background:#f1f1f1;display:flex;flex-direction:column;align-items:center;padding:12px 0 7px;box-sizing:border-box}
.th{width:18px;height:442px;background:#c1c1c1;margin-top:3px;flex:none}.sb .dn{margin-top:auto}
</style>
<div class="p"><studio-header></studio-header><div class="body"><crumb-bar></crumb-bar><view-tabs></view-tabs>
<div class="top"><h2><fit-text w="142">Metric chart</fit-text><ui-icon name="info" scale=".68"></ui-icon></h2>
<div class="pc"><fit-text w="144">Prediction column:</fit-text><fit-text class="v" w="79">RainToday</fit-text></div></div>
<parallel-chart></parallel-chart>
<div class="lead"><h2><fit-text w="245">Pipeline leaderboard</fit-text><ui-icon name="filter"></ui-icon></h2></div></div></div>
<div class="sb"><ui-icon name="up"></ui-icon><div class="th"></div><ui-icon class="dn" name="down"></ui-icon></div>`);

/* ---------- taskbar ---------- */
define('task-app', el => `<style>
:host{display:flex;flex:none;flex-direction:column;width:62px;height:50px;align-items:center}
.i{height:47px;display:flex;align-items:center;padding-top:3px;box-sizing:border-box}
.l{height:3px;width:51px;display:flex}
:host([open]) .l{background:#76b9ed}
:host([multi]) .l{background:linear-gradient(90deg,#76b9ed 40px,#49718f 40px)}
:host([active]){background:linear-gradient(90deg,transparent 1px,#4b5b65 1px 57px,#35454f 57px 58px,#4b5962 58px)}
:host([active]) .l{width:61px;background:linear-gradient(90deg,#76b9ed 56px,#5590bb 56px)}
</style><div class="i"><ui-icon name="${el.getAttribute('icon')}" scale="${el.getAttribute('scale') || .95}"></ui-icon></div><div class="l"></div>`);

define('task-bar', `<style>
:host{display:flex;height:50px;flex:none;background:linear-gradient(90deg,#213a43 0,#20373f 32%,#1f3040 60%,#1c2c40 75%,#1a2541 90%,#1b2743);color:#fff;font:18px/24px ${SEG};align-items:center}
.st{width:60px;display:flex;justify-content:center}
.s{width:430px;height:50px;box-sizing:border-box;background:#333;border:1px solid #666b6e;display:flex;align-items:center;padding-left:14px;color:#dcdcdc}
.s .k{margin-right:14px}.s .f{margin:13px 0 0 auto}
.cell{width:60px;display:flex;justify-content:center}
.tray{margin-left:auto;display:flex;align-items:center}
.tc{width:30px;display:flex;justify-content:center}
.eng{font-size:15.500px;margin-left:8px}
.dt{width:82px;margin-left:13.500px;display:flex;flex-direction:column;align-items:center;font-size:15px;line-height:22.500px;padding-bottom:1px}
.end{width:1px;height:50px;background:#7c8494;margin:0 5px 0 15.500px}
</style>
<div class="st"><ui-icon name="win"></ui-icon></div>
<div class="s"><ui-icon class="k" name="tsearch"></ui-icon><fit-text w="164">Type here to search</fit-text><ui-icon class="f" name="football"></ui-icon></div>
<div class="cell"><ui-icon name="cortana"></ui-icon></div><div class="cell" style="width:63px"><ui-icon name="tview"></ui-icon></div>
<task-app icon="edge"></task-app><task-app icon="explorer" open multi></task-app><task-app icon="store"></task-app><task-app icon="mail"></task-app><task-app icon="wps" open multi></task-app><task-app icon="chromeG" open></task-app><task-app icon="brave" open scale=".9"></task-app><task-app icon="chromeA" open active></task-app><task-app icon="jup" open></task-app><task-app icon="photos" open></task-app>
<div class="tray"><ui-icon name="weather" scale=".95"></ui-icon><fit-text w="38" style="margin:0 24px 0 10px;font-size:17px">21°C</fit-text>
${['tup','drive','meet','batt','net','snd'].map(n => `<div class="tc"><ui-icon name="${n}"></ui-icon></div>`).join('')}
<fit-text class="eng" w="29">ENG</fit-text><div class="dt"><fit-text w="62">06:31 AM</fit-text><fit-text w="76">18-11-2022</fit-text></div>
<ui-icon name="notif" style="margin:6px 0 0 20px"></ui-icon><span class="end"></span></div>`);

/* Spaces its text so that it spans exactly the given width. Defined last, when every parent is styled. */
define('fit-text', el => `<style>:host{display:inline-block;flex:none;white-space:nowrap;width:${el.getAttribute('w')}px}span{display:inline-block;white-space:pre}</style><span><slot></slot></span>`, el => {
  const span = el.shadowRoot.querySelector('span');
  const n = el.textContent.length;
  const w = +el.getAttribute('w');
  const d = (w - span.getBoundingClientRect().width) / n;
  span.style.letterSpacing = d.toFixed(3) + 'px';
});
</script>
</body>
</html>
